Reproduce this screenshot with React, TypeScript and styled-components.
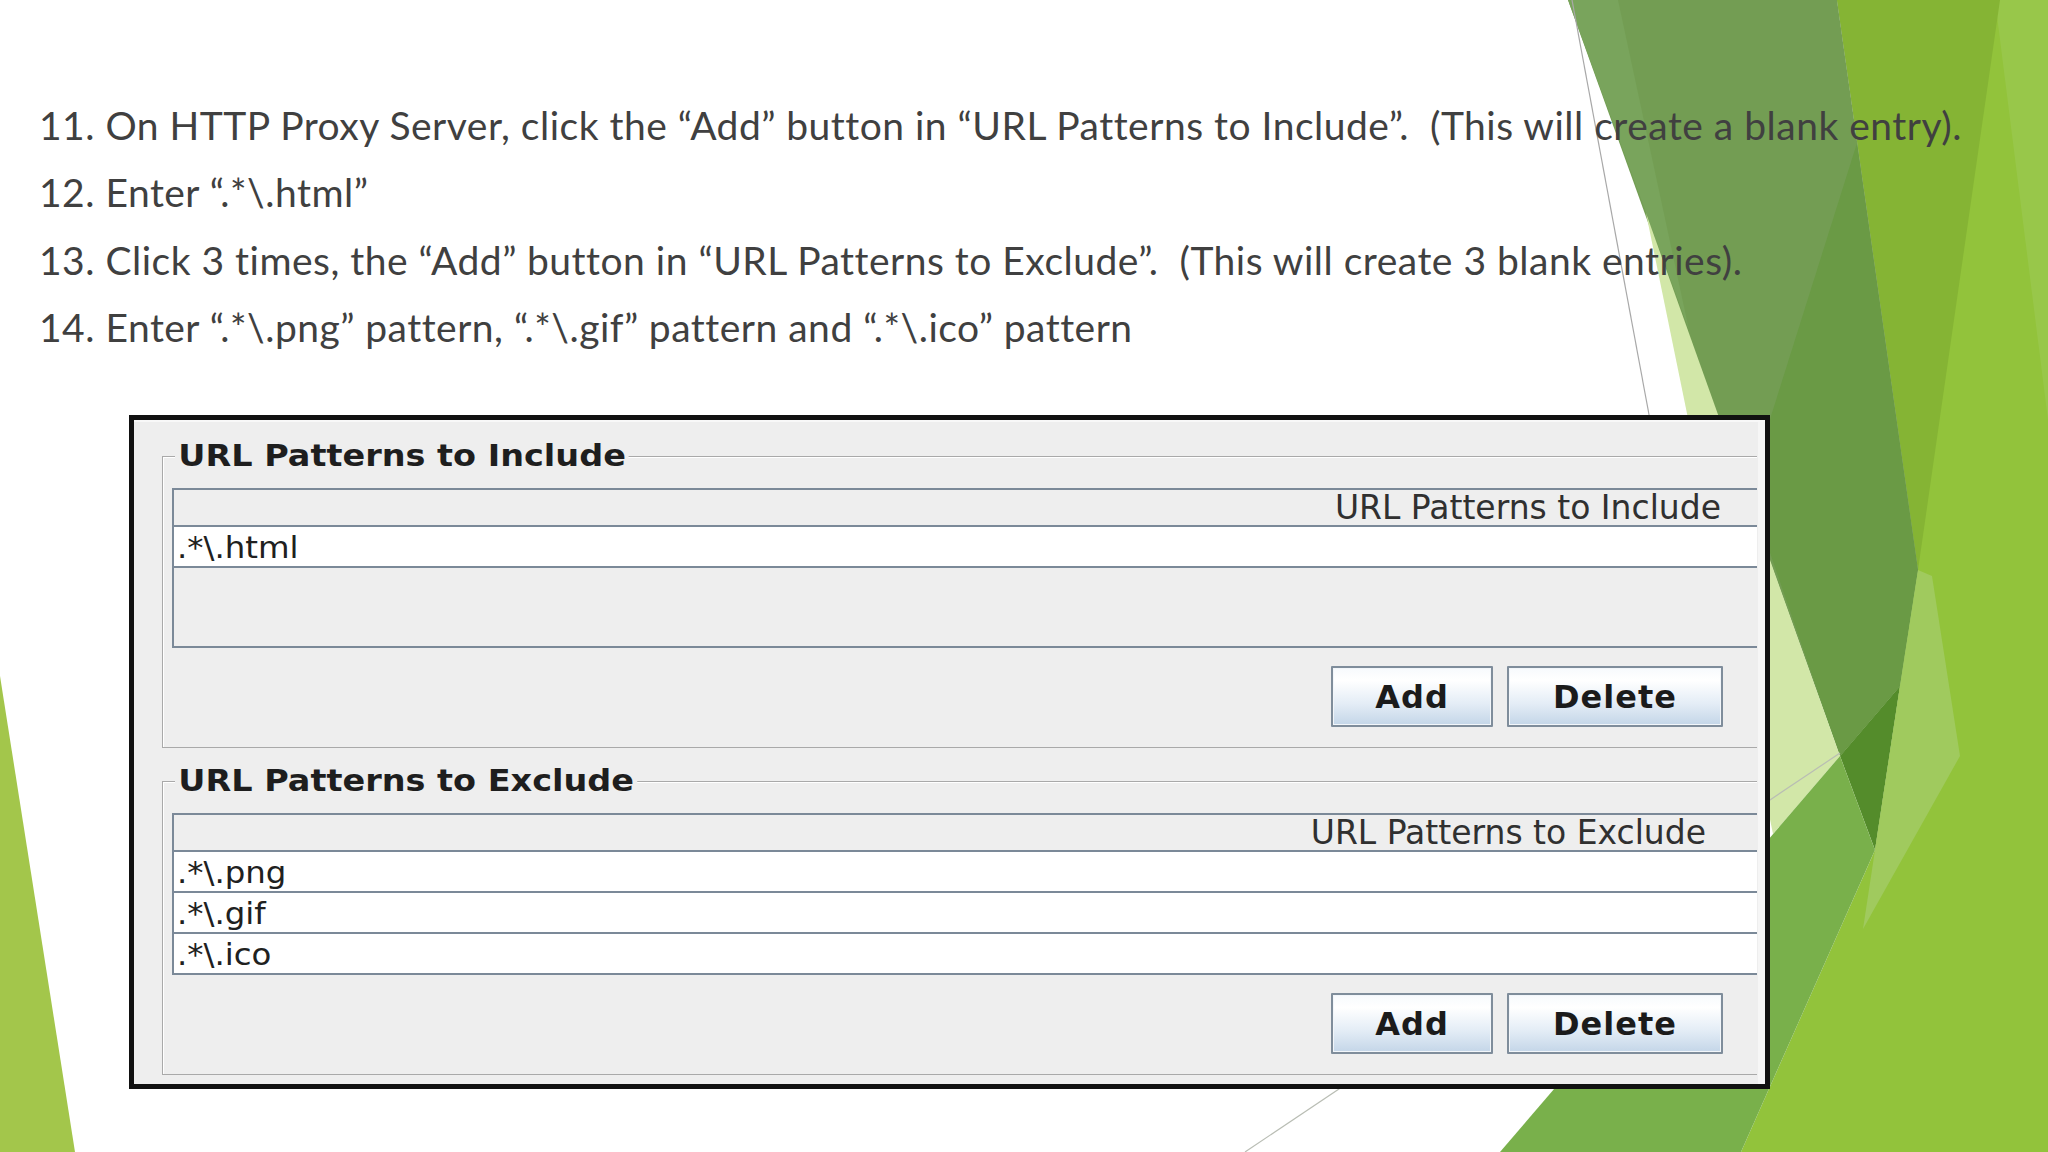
import React from "react";
import styled, { createGlobalStyle } from "styled-components";

const GlobalStyle = createGlobalStyle`
  html, body {
    margin: 0;
    padding: 0;
    background: #ffffff;
  }
`;

const Slide = styled.div`
  position: relative;
  width: 2048px;
  height: 1152px;
  overflow: hidden;
  background: #ffffff;
`;

const Backdrop = styled.svg`
  position: absolute;
  left: 0;
  top: 0;
  width: 2048px;
  height: 1152px;
`;

const Content = styled.div`
  position: relative;
  padding-top: 92px;
`;

const Step = styled.p`
  margin: 0;
  padding-left: 39px;
  font-family: Lato, "Open Sans", sans-serif;
  font-size: 39px;
  letter-spacing: 0.5px;
  line-height: 67.3px;
  color: #404040;
  white-space: pre;
`;

const Frame = styled.div`
  margin: 54px 0 0 129px;
  width: 1641px;
  box-sizing: border-box;
  border: 5px solid #111111;
  background: #eeeeee;
  box-shadow: inset 0 2px 0 #f8f8f8, inset -7px 0 0 #f6f6f6;
  padding: 36px 8px 9px 28px;
  display: flex;
  flex-direction: column;
  gap: 33px;
`;

const Group = styled.div`
  position: relative;
  border: 1px solid #a9a9a9;
  border-right: none;
  box-shadow: inset 1px 1px 0 #ffffff;
  padding: 31px 0 20px 9px;
`;

const Legend = styled.span`
  position: absolute;
  top: -21px;
  left: 12px;
  padding: 0 3px;
  background: #eeeeee;
  font-family: "DejaVu Sans", sans-serif;
  font-weight: bold;
  font-size: 31px;
  line-height: 38px;
  color: #1e1e1e;
  white-space: nowrap;
  transform-origin: left center;
  transform: scaleX(1.08);
`;

const Table = styled.div`
  border-top: 2px solid #7b8998;
  border-left: 2px solid #7b8998;
  background: #eeeeee;
`;

const Header = styled.div<{ $inset: number }>`
  height: 35px;
  border-bottom: 2px solid #7b8998;
  display: flex;
  justify-content: flex-end;
  padding-right: ${(p) => p.$inset}px;
  font-family: "DejaVu Sans", sans-serif;
  font-size: 33px;
  line-height: 35px;
  color: #303030;
  white-space: nowrap;
`;

const Row = styled.div`
  height: 41px;
  box-sizing: border-box;
  border-bottom: 2px solid #7b8998;
  background: #ffffff;
  padding: 3px 0 0 3px;
  font-family: "DejaVu Sans", sans-serif;
  font-size: 30px;
  line-height: 36px;
  color: #202020;
`;

const CellText = styled.span`
  display: inline-block;
  transform-origin: left center;
  transform: scaleX(1.08);
  white-space: pre;
`;

const Filler = styled.div`
  height: 78px;
  border-bottom: 2px solid #7b8998;
`;

const Buttons = styled.div`
  display: flex;
  justify-content: flex-end;
  gap: 14px;
  padding-right: 34px;
  margin-top: 18px;
`;

const Button = styled.button<{ $width: number }>`
  width: ${(p) => p.$width}px;
  height: 61px;
  box-sizing: border-box;
  border: 2px solid #7f8d9b;
  border-radius: 1px;
  background: linear-gradient(
    to bottom,
    #f7fafd 0%,
    #ffffff 22%,
    #e4edf6 62%,
    #c4d6e8 100%
  );
  box-shadow: inset 0 0 0 1px #f2f6fa;
  font-family: "DejaVu Sans", sans-serif;
  font-weight: bold;
  font-size: 32px;
  letter-spacing: 1px;
  color: #1b1b1b;
  padding: 0;
  cursor: default;
`;

const steps = [
  "11. On HTTP Proxy Server, click the \u201CAdd\u201D button in \u201CURL Patterns to Include\u201D.  (This will create a blank entry).",
  "12. Enter \u201C.*\\.html\u201D",
  "13. Click 3 times, the \u201CAdd\u201D button in \u201CURL Patterns to Exclude\u201D.  (This will create 3 blank entries).",
  "14. Enter \u201C.*\\.png\u201D pattern, \u201C.*\\.gif\u201D pattern and \u201C.*\\.ico\u201D pattern",
];

const Facets = () => (
  <Backdrop viewBox="0 0 2048 1152">
    <polygon points="0,676 75,1152 0,1152" fill="#a3c64b" />
    <polygon
      points="1837,0 2048,0 2048,1152 1741,1152 1875,850 1900,686 1918,570"
      fill="#92c33b"
    />
    <polygon points="1995,0 2048,0 2048,420" fill="#98c74a" />
    <polygon points="1837,0 2000,0 1918,570" fill="#85b434" />
    <polygon points="1568,0 1837,0 1918,570 1900,686 1840,756" fill="#739d53" />
    <polygon points="1568,0 1618,0 1689,330" fill="#79a45c" />
    <polygon points="1857,143 1918,570 1900,686 1840,756 1748,489" fill="#6a9a45" />
    <polygon points="1646,213 1840,756 1773,834" fill="#d2e7a8" />
    <polygon points="1840,756 1900,686 1875,850" fill="#548c2b" />
    <polygon
      points="1918,570 1932,576 1960,756 1863,929 1875,850 1900,686"
      fill="#a0ca5e"
    />
    <polygon points="1840,756 1875,850 1741,1152 1500,1152" fill="#79b04b" />
    <line x1="1572" y1="0" x2="1650" y2="420" stroke="#a8a8a8" strokeWidth="1.2" />
    <line x1="1840" y1="753" x2="1245" y2="1152" stroke="#b9bdb4" strokeWidth="1.2" />
  </Backdrop>
);

const App = () => {
  return (
    <Slide>
      <GlobalStyle />
      <Facets />
      <Content>
        {steps.map((s) => (
          <Step key={s}>{s}</Step>
        ))}
        <Frame>
          <Group>
            <Legend>URL Patterns to Include</Legend>
            <Table>
              <Header $inset={36}>URL Patterns to Include</Header>
              <Row>
                <CellText>.*\.html</CellText>
              </Row>
              <Filler />
            </Table>
            <Buttons>
              <Button $width={162}>Add</Button>
              <Button $width={216}>Delete</Button>
            </Buttons>
          </Group>
          <Group>
            <Legend>URL Patterns to Exclude</Legend>
            <Table>
              <Header $inset={51}>URL Patterns to Exclude</Header>
              <Row>
                <CellText>.*\.png</CellText>
              </Row>
              <Row>
                <CellText>.*\.gif</CellText>
              </Row>
              <Row>
                <CellText>.*\.ico</CellText>
              </Row>
            </Table>
            <Buttons>
              <Button $width={162}>Add</Button>
              <Button $width={216}>Delete</Button>
            </Buttons>
          </Group>
        </Frame>
      </Content>
    </Slide>
  );
};

export default App;
